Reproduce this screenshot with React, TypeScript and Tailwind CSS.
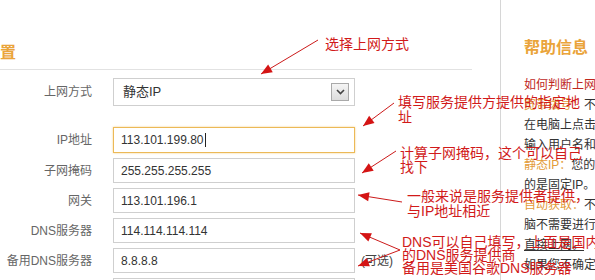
import React from "react";

const FONT = { fontFamily: '"Liberation Sans", "Noto Sans CJK SC", sans-serif' };

type Arrow = { x1: number; y1: number; x2: number; y2: number };

const arrows: Arrow[] = [
  { x1: 318, y1: 40, x2: 261, y2: 74 },
  { x1: 394, y1: 103, x2: 363, y2: 126 },
  { x1: 396, y1: 151, x2: 362, y2: 173 },
  { x1: 402, y1: 202, x2: 358, y2: 195 },
  { x1: 400, y1: 250, x2: 360, y2: 233 },
  { x1: 400, y1: 250, x2: 358, y2: 266 },
];

function head(a: Arrow) {
  const dx = a.x2 - a.x1;
  const dy = a.y2 - a.y1;
  const len = Math.hypot(dx, dy);
  const ux = dx / len;
  const uy = dy / len;
  const L = 11;
  const W = 4.5;
  const bx = a.x2 - ux * L;
  const by = a.y2 - uy * L;
  return `${a.x2},${a.y2} ${bx - uy * W},${by + ux * W} ${bx + uy * W},${by - ux * W}`;
}

function Field({ label, value, focused, h = "h-[25px]" }: { label: string; value: string; focused?: boolean; h?: string }) {
  return (
    <div className={`flex items-center ${h}`}>
      <div className="w-[92px] text-right text-[12px] text-[#666] whitespace-nowrap">{label}</div>
      <div
        className={`ml-[21px] w-[242px] h-full flex items-center pl-[7px] text-[12px] text-[#333] bg-white border ${
          focused ? "border-[#ecb957] shadow-[0_0_2px_#f3d08a]" : "border-[#cfcfcf]"
        }`}
      >
        {value}
        {focused && <span className="inline-block w-px h-[14px] bg-[#222] ml-px" />}
      </div>
    </div>
  );
}

export default function App() {
  return (
    <div className="relative w-[595px] h-[280px] overflow-hidden bg-white flex" style={FONT}>
      {/* Left column */}
      <div className="w-[501px] shrink-0 h-full border-r border-[#d6d6d6]">
        <div className="pt-[45px] text-[16px] leading-[16px] font-bold text-[#eaa43a]">置</div>
        <div className="mt-[8px] h-px w-[472px] bg-[#e2e2e2]" />
        <div className="mt-[8px] flex flex-col">
          <div className="flex items-center h-[28px]">
            <div className="w-[92px] text-right text-[12px] text-[#666]">上网方式</div>
            <div className="ml-[21px] w-[242px] h-full flex items-center justify-between pl-[9px] pr-[5px] border border-[#cfcfcf] bg-white">
              <span className="text-[13px] text-[#333]">静态IP</span>
              <span className="w-[18px] h-[18px] border border-[#a9a9a9] bg-gradient-to-b from-[#f4f4f4] to-[#dcdcdc] flex items-center justify-center">
                <svg width="9" height="6" viewBox="0 0 9 6">
                  <path d="M1 1 L4.5 4.5 L8 1" stroke="#444" strokeWidth="1.6" fill="none" />
                </svg>
              </span>
            </div>
          </div>
          <div className="mt-[21px] flex flex-col gap-[5px]">
            <Field label="IP地址" value="113.101.199.80" focused h="h-[26px]" />
            <Field label="子网掩码" value="255.255.255.255" />
            <Field label="网关" value="113.101.196.1" />
            <Field label="DNS服务器" value="114.114.114.114" />
            <div className="flex items-center">
              <Field label="备用DNS服务器" value="8.8.8.8" />
              <span className="ml-[6px] text-[12px] text-[#444]">(可选)</span>
            </div>
            <Field label="" value="" />
          </div>
        </div>
      </div>

      {/* Right column */}
      <div className="pl-[23px] pt-[40px] whitespace-nowrap">
        <div className="text-[16px] leading-[16px] font-bold text-[#eaa43a]">帮助信息</div>
        <div className="mt-[19px] text-[12px] text-[#333]">
          <div className="h-[20px] leading-[20px] text-[#c0281e]">如何判断上网方式？</div>
          <div className="h-[20px] leading-[20px]">
            <span className="text-[#e39b3a]">宽带拨号：</span>不需要
          </div>
          <div className="h-[20px] leading-[20px]">在电脑上点击“宽带连接”</div>
          <div className="h-[20px] leading-[20px]">输入用户名和密码上网</div>
          <div className="h-[20px] leading-[20px]">
            <span className="text-[#e39b3a]">静态IP：</span>您的宽带
          </div>
          <div className="h-[20px] leading-[20px]">的是固定IP。</div>
          <div className="h-[20px] leading-[20px]">
            <span className="text-[#e39b3a]">自动获取：</span>不使用
          </div>
          <div className="h-[20px] leading-[20px]">脑不需要进行任何设置</div>
          <div className="h-[20px] leading-[20px] underline">直接上网。</div>
          <div className="h-[20px] leading-[20px]">如果您不确定上网方式</div>
        </div>
      </div>

      {/* Annotations */}
      <div className="absolute left-[325px] top-[37px] text-[14px] leading-[15px] text-[#d11a1a] whitespace-nowrap">选择上网方式</div>
      <div className="absolute left-[398px] top-[95px] w-[184px] text-[14px] leading-[15px] text-[#d11a1a]">填写服务提供方提供的指定地址</div>
      <div className="absolute left-[400px] top-[146px] w-[184px] text-[14px] leading-[14px] text-[#d11a1a]">计算子网掩码，这个可以自己找下</div>
      <div className="absolute left-[407px] top-[189px] text-[14px] leading-[15px] text-[#d11a1a] whitespace-nowrap">
        <div>一般来说是服务提供者提供，</div>
        <div>与IP地址相近</div>
      </div>
      <div className="absolute left-[402px] top-[236px] text-[14px] leading-[13px] text-[#d11a1a] whitespace-nowrap">
        <div>DNS可以自己填写，上面是国内</div>
        <div>的DNS服务提供商</div>
        <div>备用是美国谷歌DNS服务器</div>
      </div>

      <svg className="absolute inset-0 pointer-events-none" width="595" height="280">
        {arrows.map((a, i) => (
          <g key={i}>
            <line x1={a.x1} y1={a.y1} x2={a.x2} y2={a.y2} stroke="#cc1a1a" strokeWidth="1" />
            <polygon points={head(a)} fill="#d41414" />
          </g>
        ))}
      </svg>
    </div>
  );
}
